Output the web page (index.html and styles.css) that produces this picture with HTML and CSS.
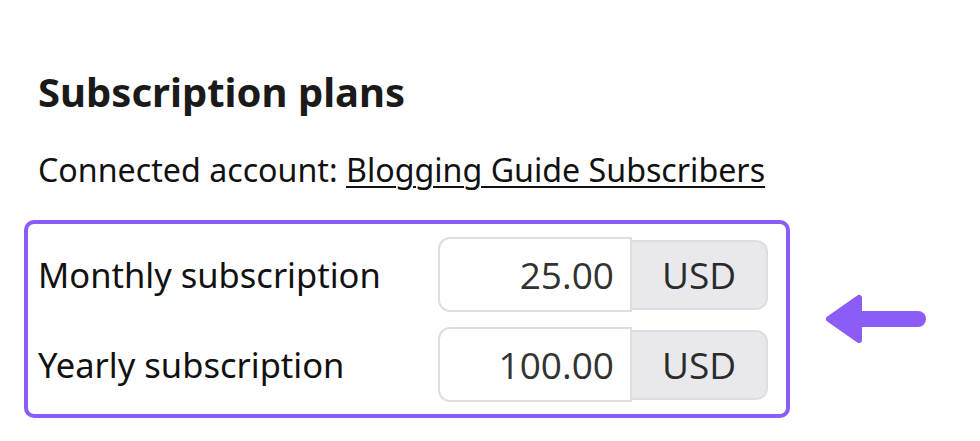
FILE: index.html
```html
<!DOCTYPE html>
<html lang="en">
<head>
    <meta charset="UTF-8">
    <meta name="viewport" content="width=device-width, initial-scale=1.0">
    <title>Subscription plans</title>
    <link rel="stylesheet" href="styles.css">
</head>
<body>
    <main class="page">
        <h2 class="title">Subscription plans</h2>
        <p class="account">Connected account: <a href="#">Blogging Guide Subscribers</a></p>

        <div class="plans-row">
            <div class="plans">
                <label class="plan-label" for="monthly">Monthly subscription</label>
                <div class="price">
                    <input type="text" id="monthly" value="25.00">
                    <span class="currency">USD</span>
                </div>

                <label class="plan-label" for="yearly">Yearly subscription</label>
                <div class="price">
                    <input type="text" id="yearly" value="100.00">
                    <span class="currency">USD</span>
                </div>
            </div>

            <!-- pointer to the plan prices -->
            <svg class="arrow" width="102" height="52" viewBox="0 0 102 52">
                <line x1="32" y1="26" x2="93" y2="26" stroke="#8b5cf6" stroke-width="16" stroke-linecap="round"/>
                <polygon points="4,26 34,5 34,47" fill="#8b5cf6" stroke="#8b5cf6" stroke-width="6" stroke-linejoin="round"/>
            </svg>
        </div>
    </main>
</body>
</html>
```

FILE: styles.css
```css
body {
    margin: 0;
    background: #fff;
    color: #111;
    font-family: "Noto Sans", "Open Sans", sans-serif;
}
.page {
    padding: 66px 0 0 38px;
}
.title {
    margin: 0;
    font-size: 40px;
    font-weight: 700;
    line-height: 52px;
    color: #1a1a1a;
}
.account {
    margin: 30px 0 0;
    font-size: 32.2px;
    line-height: 44px;
}
.account a {
    color: #111;
    text-decoration: underline;
    text-underline-offset: 4px;
    text-decoration-thickness: 2px;
}
.plans-row {
    display: flex;
    align-items: center;
    gap: 35px;
    margin: 28px 0 0 -14px;
}
.plans {
    display: grid;
    grid-template-columns: 400px auto;
    row-gap: 15px;
    align-items: center;
    width: 766px;
    box-sizing: border-box;
    padding: 13px 18px 12px 10px;
    border: 4px solid #8b5cf6;
    border-radius: 10px;
}
.plan-label {
    font-size: 34.5px;
}
.price {
    display: flex;
    align-items: center;
}
.price input {
    width: 194px;
    height: 75px;
    box-sizing: border-box;
    padding: 0 16px 0 10px;
    border: 2px solid #dedede;
    border-radius: 12px 0 0 12px;
    font-family: "Open Sans", sans-serif;
    font-size: 37px;
    color: #333;
    text-align: right;
    outline: none;
}
.currency {
    display: flex;
    align-items: center;
    justify-content: center;
    width: 136px;
    height: 70px;
    box-sizing: border-box;
    border: 2px solid #dedede;
    border-left: none;
    border-radius: 0 12px 12px 0;
    background: #e9e9ed;
    font-family: "Open Sans", sans-serif;
    font-size: 37px;
    color: #2b2b2b;
}
.arrow {
    flex: none;
}
```
